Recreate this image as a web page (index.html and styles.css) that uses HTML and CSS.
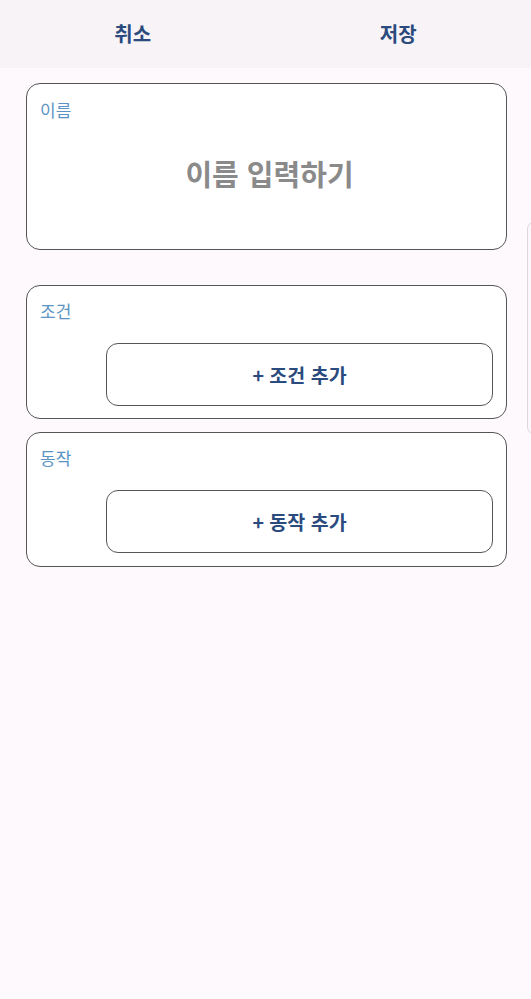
FILE: index.html
```html
<!DOCTYPE html>
<html lang="ko">
<head>
<meta charset="utf-8">
<link rel="stylesheet" href="styles.css">
</head>
<body>
<header class="topbar">
  <button class="top-btn">취소</button>
  <button class="top-btn">저장</button>
</header>
<main class="content">
  <section class="card card-name">
    <div class="card-label">이름</div>
    <div class="name-input">이름 입력하기</div>
  </section>
  <section class="card card-cond">
    <div class="card-label">조건</div>
    <button class="add-btn">+ 조건 추가</button>
  </section>
  <section class="card card-act">
    <div class="card-label">동작</div>
    <button class="add-btn">+ 동작 추가</button>
  </section>
</main>
<div class="edge-handle"></div>
</body>
</html>
```
FILE: styles.css
```css
html, body {
  margin: 0;
  padding: 0;
}
body {
  background: #fdf9fc;
  font-family: "Noto Sans CJK KR", "Noto Sans", sans-serif;
  width: 531px;
  height: 999px;
  overflow: hidden;
  position: relative;
}
.topbar {
  height: 68px;
  background: #f7f3f6;
  display: flex;
}
.top-btn {
  flex: 1;
  border: none;
  background: transparent;
  font-family: inherit;
  font-size: 20px;
  font-weight: 700;
  color: #2b4a7d;
  padding: 0;
  padding-bottom: 1px;
}
.content {
  padding: 15px 24px 0 26px;
  display: flex;
  flex-direction: column;
}
.card {
  background: #ffffff;
  border: 1px solid #555555;
  border-radius: 14px;
  padding: 13px 13px 12px 13px;
  display: flex;
  flex-direction: column;
}
.card-name {
  height: 167px;
  box-sizing: border-box;
  padding-top: 14px;
}
.card-cond {
  margin-top: 35px;
}
.card-act {
  margin-top: 13px;
  padding-bottom: 13px;
}
.card-label {
  font-size: 17px;
  line-height: 24px;
  color: #5b94c2;
}
.name-input {
  margin-top: 31px;
  text-align: center;
  font-size: 29px;
  line-height: 40px;
  font-weight: 700;
  color: #8a8a8a;
  padding-left: 6px;
}
.add-btn {
  margin-top: 20px;
  margin-left: 66px;
  height: 63px;
  background: #ffffff;
  border: 1px solid #555555;
  border-radius: 12px;
  font-family: inherit;
  font-size: 19.5px;
  font-weight: 700;
  color: #2b4a7d;
  padding: 0;
}
.edge-handle {
  position: absolute;
  left: 527px;
  top: 222px;
  width: 12px;
  height: 210px;
  border: 1px solid #dcd8dc;
  border-radius: 8px;
  background: #fbf7fa;
}
```
